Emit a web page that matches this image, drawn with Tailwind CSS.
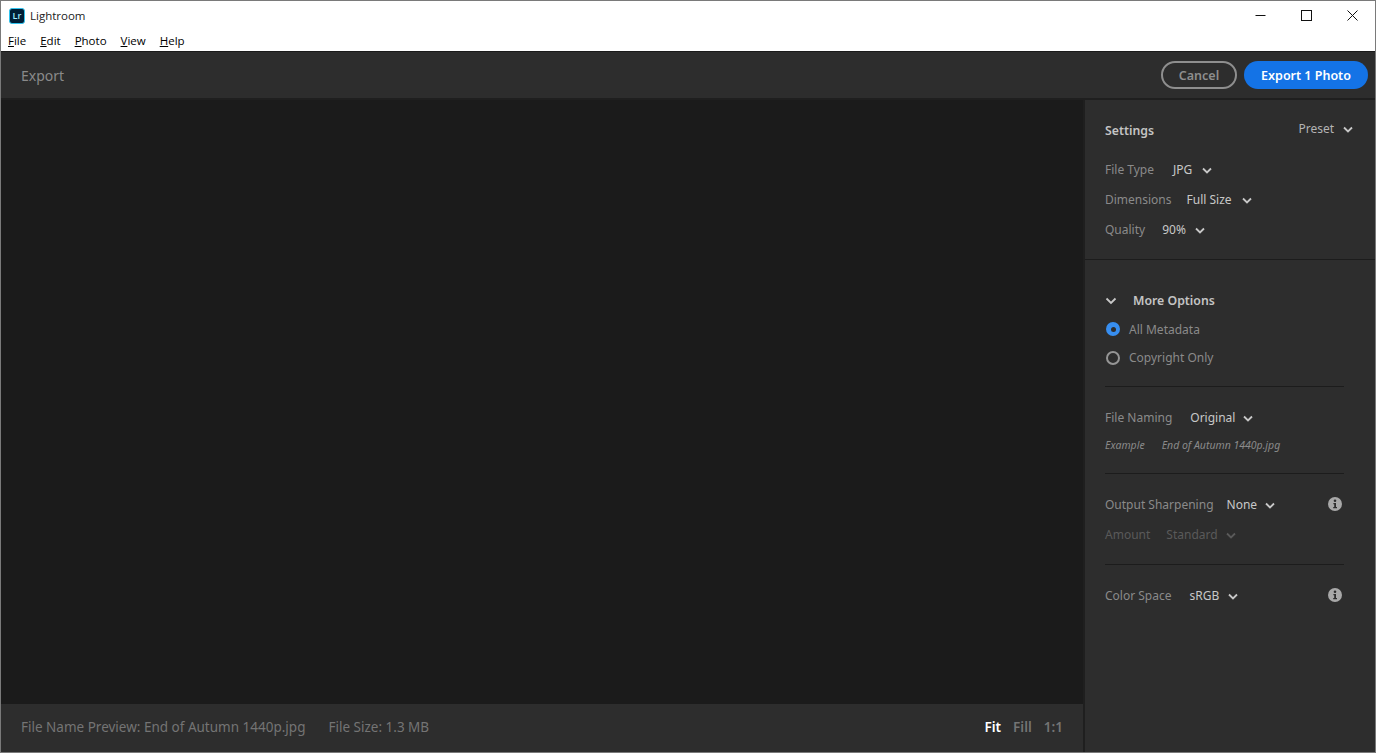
<!DOCTYPE html>
<html><head><meta charset="utf-8"><script src="https://cdn.jsdelivr.net/npm/@tailwindcss/browser@4"></script></head>
<body class="m-0 overflow-hidden bg-[#2d2d2d]">
<div class="w-[1376px] h-[753px] flex flex-col border border-[#7a7a7a] overflow-hidden font-['Noto_Sans',sans-serif]">
  <div class="h-[50px] bg-white shrink-0 flex flex-col font-['Open_Sans',sans-serif] text-black text-[11.5px] relative">
    <div class="h-[28px] flex items-center pl-[8px] gap-[5px] pt-[1px]">
      <div class="w-[16px] h-[16px] rounded-[3px] bg-[#001e36] border border-[#31c5f0] flex items-center justify-center text-[#a6ecff] text-[9px] font-semibold leading-none">Lr</div>
      <span class="text-[#222]">Lightroom</span>
    </div>
    <div class="flex pl-[7px] gap-[14px] h-[20px] mt-[2px] items-center">
      <span><u>F</u>ile</span><span><u>E</u>dit</span><span><u>P</u>hoto</span><span><u>V</u>iew</span><span><u>H</u>elp</span>
    </div>
    <div class="absolute right-0 top-0 h-[29px] flex">
      <div class="w-[46px] h-[29px] flex items-center justify-center"><svg width="11" height="11" viewBox="0 0 11 11"><path d="M0.5 5.5H10.5" stroke="#111" fill="none"/></svg></div>
      <div class="w-[46px] h-[29px] flex items-center justify-center"><svg width="11" height="11" viewBox="0 0 11 11"><rect x=".5" y=".5" width="10" height="10" stroke="#111" fill="none"/></svg></div>
      <div class="w-[46px] h-[29px] flex items-center justify-center"><svg width="11" height="11" viewBox="0 0 11 11"><path d="M.5.5L10.5 10.5M10.5.5L.5 10.5" stroke="#111" fill="none"/></svg></div>
    </div>
  </div>
  <div class="h-[49px] shrink-0 bg-[#2d2d2d] border-t border-[#1a1a1a] border-b-2 border-b-[#1f1f1f] flex items-center justify-between pl-[20px] pr-[7px]">
    <span class="text-[14px] text-[#8a8a8a]">Export</span>
    <div class="flex gap-[7px] items-center">
      <div class="w-[76px] h-[28px] rounded-full border-2 border-[#8e8e8e] flex items-center justify-center text-[12.5px] font-semibold text-[#8e8e8e] pt-[2px]">Cancel</div>
      <div class="w-[124px] h-[28px] rounded-full bg-[#1473e6] flex items-center justify-center text-[12.5px] font-semibold text-white pt-[2px]">Export 1 Photo</div>
    </div>
  </div>
  <div class="flex-1 flex min-h-0">
    <div class="w-[1082px] shrink-0 flex flex-col">
      <div class="flex-1 bg-[#1b1b1b]"></div>
      <div class="h-[48px] bg-[#2d2d2d] flex items-center justify-between pl-[20px] pr-[20px] pb-[2px] text-[13.5px] text-[#747474]">
        <div class="flex gap-[23px]"><span>File Name Preview: End of Autumn 1440p.jpg</span><span>File Size: 1.3 MB</span></div>
        <div class="flex gap-[12px] font-semibold"><span class="text-white">Fit</span><span>Fill</span><span>1:1</span></div>
      </div>
    </div>
    <div class="flex-1 bg-[#2d2d2d] border-l-2 border-[#1f1f1f] text-[12px] text-[#8a8a8a] flex flex-col">
      <div class="h-[160px] border-b border-[#1c1c1c] shrink-0 pl-[20px] pr-[22px] pt-[21px]">
        <div class="flex justify-between items-start h-[20px]">
          <span class="font-semibold text-[#c4c4c4] text-[12.3px] leading-[20px]">Settings</span>
          <span class="flex items-center gap-[9px] text-[#b4b4b4] leading-[16px]">Preset <svg width="10" height="7" viewBox="0 0 10 7"><path d="M1 1.5L5 5.5L9 1.5" stroke="#c8c8c8" stroke-width="1.8" fill="none"/></svg></span>
        </div>
        <div class="flex flex-col gap-[14px] mt-[21px]">
          <div class="flex items-center gap-[18px] h-[16px]"><span class="w-[50px]">File Type</span> <span class="flex items-center gap-[10px] text-[#c8c8c8]">JPG <svg width="10" height="7" viewBox="0 0 10 7"><path d="M1 1.5L5 5.5L9 1.5" stroke="#c8c8c8" stroke-width="1.8" fill="none"/></svg></span></div>
          <div class="flex items-center gap-[15px] h-[16px]">Dimensions <span class="flex items-center gap-[10px] text-[#c8c8c8]">Full Size <svg width="10" height="7" viewBox="0 0 10 7"><path d="M1 1.5L5 5.5L9 1.5" stroke="#c8c8c8" stroke-width="1.8" fill="none"/></svg></span></div>
          <div class="flex items-center gap-[17px] h-[16px]">Quality <span class="flex items-center gap-[9px] text-[#c8c8c8]">90% <svg width="10" height="7" viewBox="0 0 10 7"><path d="M1 1.5L5 5.5L9 1.5" stroke="#c8c8c8" stroke-width="1.8" fill="none"/></svg></span></div>
        </div>
      </div>
      <div class="pl-[20px] pr-[31px] pt-[31px]">
        <div class="flex items-center gap-[16px] h-[20px] font-semibold text-[12.3px] text-[#c4c4c4]"><svg width="12" height="8" viewBox="0 0 12 8"><path d="M1.5 1.5L6 6L10.5 1.5" stroke="#c8c8c8" stroke-width="1.8" fill="none"/></svg>More Options</div>
        <div class="flex items-center gap-[9px] h-[16px] mt-[11px] pl-[1px]"><span class="w-[14px] h-[14px] rounded-full bg-[#378ef0] flex items-center justify-center -translate-y-px"><span class="w-[5px] h-[5px] rounded-full bg-[#2d2d2d]"></span></span>All Metadata</div>
        <div class="flex items-center gap-[9px] h-[16px] mt-[12px] pl-[1px]"><span class="w-[14px] h-[14px] rounded-full border-2 border-[#959595]"></span>Copyright Only</div>
        <div class="border-t border-[#1c1c1c] mt-[20px] pt-[23px]">
          <div class="flex items-center gap-[18px] h-[16px]">File Naming <span class="flex items-center gap-[8px] text-[#c8c8c8]">Original <svg width="10" height="7" viewBox="0 0 10 7"><path d="M1 1.5L5 5.5L9 1.5" stroke="#c8c8c8" stroke-width="1.8" fill="none"/></svg></span></div>
          <div class="flex gap-[17px] h-[16px] mt-[11px] italic text-[10.5px] leading-[16px]"><span>Example</span><span>End of Autumn 1440p.jpg</span></div>
        </div>
        <div class="border-t border-[#1c1c1c] mt-[20px] pt-[23px]">
          <div class="flex items-center justify-between h-[16px]">
            <span class="flex items-center gap-[13px]">Output Sharpening <span class="flex items-center gap-[8px] text-[#c8c8c8]">None <svg width="10" height="7" viewBox="0 0 10 7"><path d="M1 1.5L5 5.5L9 1.5" stroke="#c8c8c8" stroke-width="1.8" fill="none"/></svg></span></span>
            <svg class="mr-[2px] -translate-y-px" width="14" height="14" viewBox="0 0 14 14"><circle cx="7" cy="7" r="7" fill="#a8a8a8"/><circle cx="7" cy="3.7" r="1.3" fill="#2d2d2d"/><path d="M5.4 6H8V10H9V11.2H5.2V10H6.2V7.2H5.4Z" fill="#2d2d2d"/></svg>
          </div>
          <div class="flex items-center gap-[16px] h-[16px] mt-[14px] text-[#5a5a5a]">Amount <span class="flex items-center gap-[8px]">Standard <svg width="10" height="7" viewBox="0 0 10 7"><path d="M1 1.5L5 5.5L9 1.5" stroke="#5a5a5a" stroke-width="1.8" fill="none"/></svg></span></div>
        </div>
        <div class="border-t border-[#1c1c1c] mt-[21px] pt-[23px]">
          <div class="flex items-center justify-between h-[16px]">
            <span class="flex items-center gap-[18px]">Color Space <span class="flex items-center gap-[9px] text-[#c8c8c8]">sRGB <svg width="10" height="7" viewBox="0 0 10 7"><path d="M1 1.5L5 5.5L9 1.5" stroke="#c8c8c8" stroke-width="1.8" fill="none"/></svg></span></span>
            <svg class="mr-[2px] -translate-y-px" width="14" height="14" viewBox="0 0 14 14"><circle cx="7" cy="7" r="7" fill="#a8a8a8"/><circle cx="7" cy="3.7" r="1.3" fill="#2d2d2d"/><path d="M5.4 6H8V10H9V11.2H5.2V10H6.2V7.2H5.4Z" fill="#2d2d2d"/></svg>
          </div>
        </div>
      </div>
    </div>
  </div>
</div>
</body></html>
